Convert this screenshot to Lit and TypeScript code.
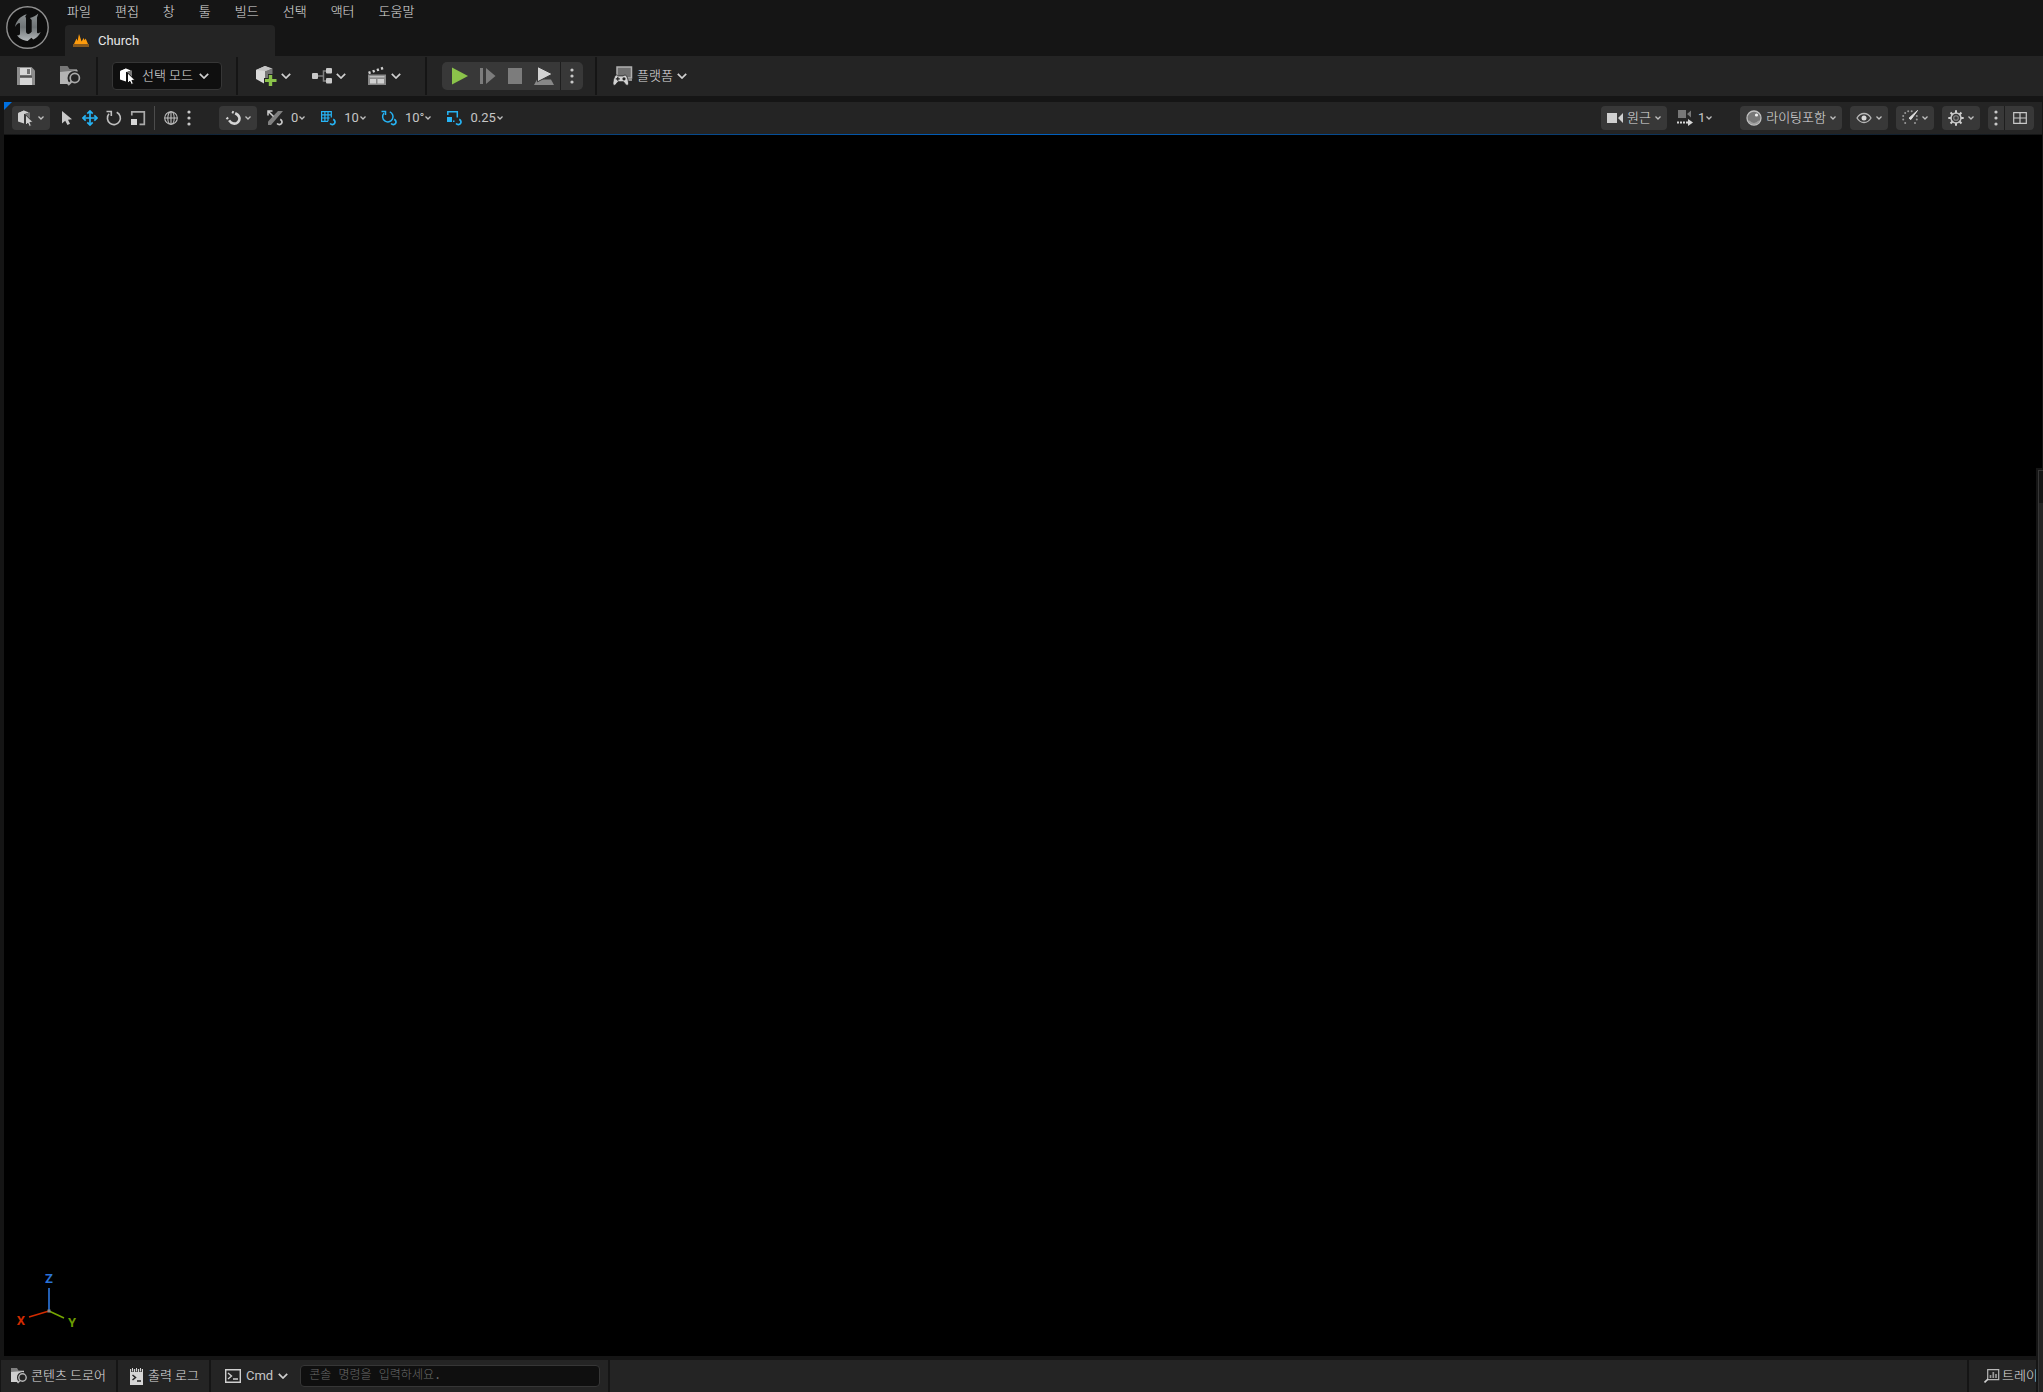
import { LitElement, html, css, svg, TemplateResult } from "lit";
import { customElement } from "lit/decorators.js";

const icon = (w: number, h: number, body: unknown) => html`
  <svg width=${w} height=${h} viewBox="0 0 ${w} ${h}" fill="none" aria-hidden="true">${body}</svg>`;

const chevron = icon(10, 6, svg`<path d="M.8.8 5 5 9.2.8" stroke="#d0d0d0" stroke-width="1.7"/>`);
const smallChevron = icon(6, 4, svg`<path d="M.5.5 3 3 5.5.5" stroke="#c0c0c0" stroke-width="1.3"/>`);

const magnetMark = (color: string) => svg`
  <path d="M13.2 9.4C15 10.200 15.500 12 14.500 13.400 13.400 14.900 11.500 14.900 10 13.500" stroke=${color} stroke-width="1.7"/>`;

const logo = icon(44, 44, svg`
  <defs>
    <linearGradient id="steel" x1="0" y1="0" x2="0" y2="1">
      <stop offset="0" stop-color="#8d9294"/><stop offset=".5" stop-color="#6e7375"/><stop offset="1" stop-color="#b4b8ba"/>
    </linearGradient>
  </defs>
  <circle cx="22.5" cy="22.5" r="20.7" fill="#0d0d0d" stroke="#909090" stroke-width="1.4"/>
  <path fill="url(#steel)" d="M10 22C11 16.3 15.2 11 21.7 9.3L20.2 11.5c.6.5.8 1.2.8 2v13c0 1.6 1 2.5 2.2 2.5 1.3 0 2.7-1.1 3.5-2.3V15.1L24.9 12.9c3.1-.6 6.2-2.2 8.4-4.4L32 12.5V27.4c0 1.1 1.4 1.2 3.7-.4-1.8 4.2-5 6.5-7.5 7.6l-1.8-1.9-3.8 3.3c-4.6-.5-9-2.8-10.500-6 1.5.6 2.900.1 2.900-1.500V19c0-1.800-2.500-1.300-5 3Z"/>`);

const levelIcon = icon(16, 13, svg`
  <path fill="#ff9c0c" d="M1 10 3.500 4.500 4.600 7 6 0 8.600 7.500 10.600 4 11.600 6.200 12.700 4.500 15 10Z"/>
  <path fill="#8a5a1c" d="M0 10h16v3H0Z"/>`);

const saveIcon = icon(18, 18, svg`
  <path fill="#8c8c8c" d="M0 0h14.500L18 3.500V18H0Z"/>
  <path fill="#d6d6d6" d="M3 1h11v7H3ZM3 11h12v7H3Z"/>
  <path fill="#707070" d="M10 2h3v5h-3Z"/><path fill="#555" d="M3 8.500h12v2H3Z"/>`);

const browseIcon = icon(21, 20, svg`
  <path fill="#777" d="M0 0h7.500l2 3H17v4H0Z"/>
  <path fill="#b4b4b4" d="M0 6 9.500 5 17.500 4v14H0Z"/>
  <circle cx="14.500" cy="12" r="7" fill="#242424"/>
  <circle cx="14.800" cy="12" r="4.600" stroke="#aaa" stroke-width="1.700"/>
  <path d="m11.500 15.500-3.500 3.500" stroke="#aaa" stroke-width="2.200"/>`);

const selectModeIcon = (light: string, side: string, back: string) => icon(16, 17, svg`
  <path fill=${light} d="M0 3.200 6 .500v13L0 11.500Z"/><path fill=${light} d="m0 3 6-2.500 5 2L7 4Z"/>
  <path fill=${side} d="m7 4 5-1.700V9L7 12Z"/>
  <path fill=${light} stroke=${back} d="M7.500 4.800v10.500l2.400-2 1.500 3.200 2-1-1.500-3 3-.4Z"/>`);

const addIcon = icon(21, 20, svg`
  <path fill="#dadada" d="M0 4 9 0l4.500 2v14L8 17.500 0 13Z"/>
  <path fill="#777" d="m9 5 7.500-2.500V13L9 17Z"/><path fill="#c4c4c4" d="M0 4 9 0l7.500 2.500L9 5Z"/>
  <path fill="#242424" d="M8 12h4V8h6v4h3v8H8Z"/>
  <path fill="#8bc34a" d="M12.800 9h3.400v4h4.300v3h-4.300v4h-3.400v-4H9v-3h3.800Z"/>`);

const graphIcon = icon(20, 16, svg`
  <path d="M5 8h6M14 3h-2.500v10H14" stroke="#808080" stroke-width="1.500"/>
  <rect y="5" width="6" height="6" rx="1" fill="#c8c8c8"/>
  <rect x="14" width="6" height="5.500" rx="1" fill="#c8c8c8"/><rect x="14" y="10" width="6" height="5.500" rx="1" fill="#c8c8c8"/>`);

const clapIcon = icon(20, 20, svg`
  <path d="M1.500 7 17.500 1.500" stroke="#d0d0d0" stroke-width="2.600" stroke-dasharray="2.200 2.200"/>
  <path fill="#898989" d="M1 8.500h18V19H1Z"/>
  <path fill="#d0d0d0" d="M3 13h6v4.500H3ZM10.500 13H17v4.500h-6.500Z"/><path d="M2.500 10.800h15" stroke="#d0d0d0"/>`);

const playIcon = icon(16, 18, svg`<path fill="#8bc34a" d="M0 .5 16 9 0 17.500Z"/>`);
const stepIcon = icon(16, 16, svg`<path fill="#7c7c7c" d="M0 0h3v16H0ZM6 0l9.500 8L6 16Z"/>`);
const stopIcon = icon(14, 16, svg`<path fill="#7c7c7c" d="M0 0h14v16H0Z"/>`);
const ejectIcon = icon(20, 18, svg`
  <path fill="#888" d="M3 12.500h14l3 5.500H0Z"/>
  <path fill="#d2d2d2" stroke="#383838" d="M3.500-.5 18.500 7 3.500 14.800Z"/>`);
const dotsIcon = icon(4, 16, svg`
  <circle cx="2" cy="2" r="1.600" fill="#c8c8c8"/><circle cx="2" cy="8" r="1.600" fill="#c8c8c8"/><circle cx="2" cy="14" r="1.600" fill="#c8c8c8"/>`);

const platformIcon = icon(20, 20, svg`
  <path d="M4 1h14.500v11H4Z" fill="#707070" stroke="#b0b0b0" stroke-width="1.500"/><path fill="#909090" d="M14 13h5v2h-5Z"/>
  <path fill="#d2d2d2" stroke="#242424" stroke-width=".8" d="M3.500 9c1 0 1.300.9 2 .9h4.500c.7 0 1-.9 2-.9 2 0 3.500 5.500 3.500 8.500 0 2-2 2.500-3.200.5l-1.800-2.300h-5.500L3.200 18C2 20 0 19.500 0 17.500 0 14.500 1.500 9 3.500 9Z"/>
  <path d="M4.800 10.800v4M2.800 12.800h4" stroke="#242424" stroke-width="1.200"/><circle cx="11" cy="12.800" r="1.600" fill="#242424"/>`);

const arrowIcon = icon(13, 16, svg`<path fill="#c8c8c8" d="M1 1v12.500l3.200-2.700L6.500 15l2.500-1.200L7 9.800l4-.6Z"/>`);
const moveIcon = icon(16, 16, svg`
  <path d="M8 2v12M2 8h12" stroke="#26b4f5" stroke-width="1.700"/>
  <path d="M5.300 3.700 8 1l2.700 2.700M5.300 12.300 8 15l2.700-2.700M3.700 5.300 1 8l2.700 2.700M12.300 5.300 15 8l-2.700 2.700" stroke="#26b4f5" stroke-width="1.700"/>`);
const rotateIcon = icon(16, 16, svg`
  <path d="M10.700 2.200A6.500 6.500 0 1 1 3 3.800" stroke="#c0c0c0" stroke-width="1.600"/>
  <path d="M.5 1.500h4.800V6" stroke="#c0c0c0" stroke-width="1.600"/>`);
const scaleIcon = icon(16, 16, svg`
  <path d="M1.800 5.500V1.800h12.500v12.500H9.500" stroke="#aaa" stroke-width="1.700"/><path fill="#d6d6d6" d="M1 9h6v6H1Z"/>`);
const globeIcon = icon(14, 14, svg`
  <g stroke="#c0c0c0" stroke-width="1.100"><circle cx="7" cy="7" r="6.300"/><ellipse cx="7" cy="7" rx="3.200" ry="6.300"/><path d="M.7 7h12.600M7 .7v12.600"/></g>`);
const magnetIcon = icon(16, 16, svg`
  <path d="M10.200 3.200c4.600 2 5.400 6.200 2.800 8.900-2.600 2.600-6.500 1.900-8.900-1.700" stroke="#d6d6d6" stroke-width="2.600"/>
  <path d="m8.700 2.600-1.700-.8M3 9 1.600 7.600" stroke="#d6d6d6" stroke-width="2.400"/>`);

const surfaceSnapIcon = icon(17, 17, svg`
  <path fill="#808080" d="M11 1h5L4 15H1v-3.500Z"/>
  <path d="m1.500 1.500 5 5M1 5.500V1h4.500" stroke="#d0d0d0" stroke-width="1.500"/>
  ${magnetMark("#c8c8c8")}`);
const gridSnapIcon = icon(17, 17, svg`
  <path d="M8 11.300H1.600V1.600h9.700V7.500M4.900 1.700v9.500M8 1.700v9.500M1.700 4.900h9.500M1.700 8h8" stroke="#26b4f5" stroke-width="1.200"/>${magnetMark("#26b4f5")}`);
const angleSnapIcon = icon(17, 17, svg`
  <path d="M8.800 1.900A5.200 5.200 0 1 1 3 3.200" stroke="#26b4f5" stroke-width="1.500"/>
  <path d="M.5 1.400h4V5" stroke="#26b4f5" stroke-width="1.500"/>${magnetMark("#26b4f5")}`);
const scaleSnapIcon = icon(17, 17, svg`
  <path d="M1.800 5V1.800h9.500V7.500M8.500 11.300H7" stroke="#26b4f5" stroke-width="1.500"/><path fill="#26b4f5" d="M1 7h5v5H1Z"/>${magnetMark("#26b4f5")}`);

const cameraIcon = icon(16, 12, svg`<path fill="#d0d0d0" d="M0 1h10v10H0ZM11 6l5-5v10Z"/>`);
const cameraSpeedIcon = icon(16, 16, svg`
  <path fill="#777" d="M1 0h8v8H1ZM10 4l4-3.500v7Z"/>
  <path d="M0 12.500h11" stroke="#d6d6d6" stroke-width="2" stroke-dasharray="2 1"/><path fill="#d6d6d6" d="M11 9 16 12.500 11 16Z"/>`);
const litIcon = icon(16, 16, svg`
  <circle cx="8" cy="8" r="7" fill="#777" stroke="#c0c0c0" stroke-width="1.300"/><path d="M3 11a6 6 0 0 0 10 0" stroke="#a0a0a0" stroke-width="1.500"/>
  <circle cx="10.500" cy="5" r="1.600" fill="#f0f0f0"/>`);
const eyeIcon = icon(16, 12, svg`
  <path d="M1 6c3.500-6 10.500-6 14 0-3.500 6-10.500 6-14 0Z" stroke="#b8b8b8" stroke-width="1.300"/><circle cx="8" cy="6" r="2.500" fill="#d8d8d8"/>`);
const gaugeDots = [[3.200, 13], [1.200, 9.500], [1.200, 6], [3.200, 3], [6.200, 1.300], [9.700, 1.300], [14.800, 6], [14.800, 9.500], [13, 13]];
const gaugeIcon = icon(16, 16, svg`
  ${gaugeDots.map(([x, y]) => svg`<circle cx=${x} cy=${y} r="1" fill="#999"/>`)}
  <path d="M15.500.5 8.800 9.600 7 8.200Z" stroke="#e0e0e0" fill="#e0e0e0"/>`);
const gearIcon = icon(16, 16, svg`
  ${[0, 45, 90, 135, 180, 225, 270, 315].map((a) => svg`<path d="M8 .3v3" stroke="#d0d0d0" stroke-width="2" transform="rotate(${a} 8 8)"/>`)}
  <circle cx="8" cy="8" r="5" stroke="#c8c8c8" stroke-width="1.500"/><circle cx="8" cy="8" r="2.300" stroke="#888" stroke-width="1.100"/>`);
const layoutIcon = icon(14, 12, svg`<path d="M.7.7h12.600v10.600H.7ZM7 .7v10.600M.7 6h12.600" stroke="#c8c8c8" stroke-width="1.200"/>`);

const drawerIcon = icon(16, 16, svg`
  <path fill="#808080" d="M0 0h6l1.500 2.500H13V6H0Z"/><path fill="#d0d0d0" d="m0 4 13-1v11H0Z"/>
  <circle cx="11.500" cy="9.500" r="5.500" fill="#242424"/><circle cx="11.500" cy="9.500" r="3.700" stroke="#b8b8b8" stroke-width="1.400"/>
  <path d="M9 12.500 6.500 15" stroke="#b8b8b8" stroke-width="1.700"/>`);
const logIcon = icon(13, 17, svg`
  <path fill="#d6d6d6" d="M0 1h13v16H0Z"/><path d="M2.500 0v4M6.500 0v4M10.500 0v4" stroke="#242424" stroke-width="2.600"/>
  <path d="M2.500 0v3.500M6.500 0v3.500M10.500 0v3.500" stroke="#d6d6d6"/><path d="m2.500 7 3 2.500-3 2.500M7 13h4" stroke="#242424" stroke-width="1.500"/>`);
const consoleIcon = icon(16, 14, svg`
  <path d="M.7.7h14.600v12.600H.7Z" stroke="#d0d0d0" stroke-width="1.400"/><path d="m3 4 3.500 3L3 10M8 10h5" stroke="#d0d0d0" stroke-width="1.400"/>`);
const traceIcon = icon(16, 16, svg`
  <path d="M3.700 1.700h11v10h-11Z" stroke="#b8b8b8" stroke-width="1.200"/>
  <path d="M6.500 10V7M9.300 10V4M12 10V6" stroke="#999" stroke-width="1.700"/><path d="m4 11-3.500 3.500" stroke="#d0d0d0" stroke-width="1.700"/>`);

const axes = icon(64, 64, svg`
  <path d="M34 18v23" stroke="#2f7fef" stroke-width="1.500"/><path d="m34 41-20 6" stroke="#d22b00" stroke-width="1.500"/>
  <path d="m34 41 15 7" stroke="#76a800" stroke-width="1.500"/><path d="M32.500 39.500h3v3h-3Z" fill="#888"/>
  <g font-family="Roboto, sans-serif" font-size="13" font-weight="700" text-anchor="middle">
    <text x="34" y="13" fill="#2a72d8">Z</text><text x="6" y="55" fill="#d22b00">X</text><text x="57" y="57" fill="#6a9c00">Y</text>
  </g>`);

const menus = ["파일", "편집", "창", "툴", "빌드", "선택", "액터", "도움말"];

@customElement("app-root")
export class AppRoot extends LitElement {
  static styles = css`
    :host {
      display: flex; flex-direction: column; height: 100vh; position: relative; overflow: hidden;
      background: #151515; color: #c6c6c6;
      font: 13px/16px Roboto, "Noto Sans CJK KR", sans-serif;
    }
    * { box-sizing: border-box; }
    svg { display: block; flex: none; }
    button {
      display: flex; align-items: center; flex: none; margin: 0; padding: 0; border: 0;
      background: none; color: inherit; font: inherit; white-space: nowrap; cursor: pointer;
    }
    .ko { font-weight: 300; color: #e0e0e0; }
    .header { display: flex; flex: none; height: 56px; }
    .logo { width: 55px; padding: 5px; flex: none; }
    .menu { display: flex; height: 24px; margin-bottom: 1px; }
    .menu button { padding: 0 12px; }
    .tab {
      width: 210px; height: 31px; margin-left: 10px; padding: 0 8px; gap: 9px;
      border-radius: 4px 4px 0 0; background: #242424; color: #e6e6e6;
    }
    .main-bar { display: flex; align-items: center; flex: none; height: 40px; background: #242424; }
    .group { display: flex; align-items: center; justify-content: center; gap: 21px; }
    .files { gap: 25px; padding: 0 15px 0 17px; }
    .rule { width: 2px; height: 38px; flex: none; background: #151515; }
    .mode {
      height: 28px; margin: 0 14px; padding: 0 12px 0 7px; gap: 6px;
      border: 1px solid #363636; border-radius: 4px; background: #0f0f0f;
    }
    .create { padding: 0 24px 0 18px; }
    .create button { gap: 4px; }
    .play {
      display: flex; align-items: center; height: 28px; margin: 0 12px 0 15px;
      border-radius: 5px; background: #383838;
    }
    .play button { height: 28px; }
    .transport { display: flex; gap: 12px; padding: 0 6px 0 10px; }
    .play .more { width: 23px; justify-content: center; border-left: 1px solid #1e1e1e; }
    .platform { gap: 4px; padding-left: 16px; }
    .view-bar {
      display: flex; align-items: center; flex: none; height: 33px; margin: 6px 1px 0 4px; padding: 0 8px 1px;
      position: relative;
      background: linear-gradient(90deg, #151515, #0062c4 50%, #151515) bottom / 100% 1px no-repeat, #242424;
    }
    .corner { position: absolute; left: 0; top: 0; border-top: 8px solid #0070e0; border-right: 8px solid transparent; }
    .chip { height: 24px; padding: 0 6px; gap: 4px; border-radius: 4px; background: #383838; }
    .tools { display: flex; align-items: center; gap: 8px; padding: 0 8px 0 11px; }
    .line { width: 1px; height: 24px; background: #4c4c4c; }
    .space { display: flex; align-items: center; gap: 9px; padding: 0 28px 0 9px; }
    .snaps { display: flex; align-items: center; gap: 15px; padding-left: 10px; }
    .snaps button { gap: 7px; }
    .value { display: flex; align-items: center; gap: 1px; }
    .grow { flex: 1; }
    .right { display: flex; align-items: center; gap: 8px; }
    .speed { gap: 5px; padding: 0 20px 0 2px; }
    .pair { display: flex; border-radius: 4px; overflow: hidden; background: #383838; }
    .pair button { height: 24px; justify-content: center; width: 16px; }
    .pair .wide { width: 30px; border-left: 1px solid #1e1e1e; }
    .viewport { flex: 1; position: relative; margin: 0 1px 0 4px; background: #000; }
    .axes { position: absolute; left: 11px; bottom: 22px; }
    .status { display: flex; flex: none; height: 32px; margin: 4px 0 0 1px; gap: 2px; }
    .cell { display: flex; align-items: center; background: #242424; gap: 4px; white-space: nowrap; overflow: hidden; }
    .drawer { padding: 0 10px; }
    .log { gap: 5px; padding: 0 10px 0 12px; }
    .cmd { padding: 0 8px 0 14px; gap: 12px; font-weight: 400; color: #c6c6c6; }
    .cmd button { gap: 5px; }
    .console {
      width: 300px; height: 22px; padding: 0 8px; border: 1px solid #363636; border-radius: 4px; outline: 0;
      background: #0f0f0f; color: #c0c0c0; font: 300 12px "Liberation Mono", "Noto Sans CJK KR", monospace;
    }
    .console::placeholder { color: #6a6a6a; opacity: 1; }
    .trace { width: 74px; padding-left: 15px; gap: 2px; }
    .side {
      position: absolute; right: 0; top: 468px; bottom: 0; width: 7px; padding-top: 33px;
      border: solid #151515; border-width: 2px 0 0 2px; background: #151515; box-shadow: inset 1px 1px #363636;
    }
    .side-body { height: 100%; margin-left: 1px; background: #242424; }
  `;

  private chip(glyph: TemplateResult, label: string, text = "") {
    return html`<button class="chip ko" aria-label=${label}>${glyph}${text ? html`<span>${text}</span>` : ""}${smallChevron}</button>`;
  }

  private snap(glyph: TemplateResult, value: string, label: string) {
    return html`<button aria-label="${label} ${value}">${glyph}<span class="value">${value}${smallChevron}</span></button>`;
  }

  private tool(glyph: TemplateResult, label: string, cls = "") {
    return html`<button class=${cls} aria-label=${label}>${glyph}</button>`;
  }

  render() {
    return html`
      <header class="header">
        <div class="logo">${logo}</div>
        <div>
          <nav class="menu ko">${menus.map((m) => html`<button>${m}</button>`)}</nav>
          <button class="tab">${levelIcon}<span>Church</span></button>
        </div>
      </header>

      <div class="main-bar">
        <div class="group files">${this.tool(saveIcon, "저장")}${this.tool(browseIcon, "찾아보기")}</div>
        <div class="rule"></div>
        <button class="mode ko">${selectModeIcon("#fff", "#777", "#0f0f0f")}<span>선택 모드</span>${chevron}</button>
        <div class="rule"></div>
        <div class="group create">
          <button aria-label="추가">${addIcon}${chevron}</button>
          <button aria-label="블루프린트">${graphIcon}${chevron}</button>
          <button aria-label="시네마틱">${clapIcon}${chevron}</button>
        </div>
        <div class="rule"></div>
        <div class="play">
          <div class="transport">
            ${this.tool(playIcon, "플레이")}${this.tool(stepIcon, "프레임 스킵")}${this.tool(stopIcon, "중지")}${this.tool(ejectIcon, "빙의 해제")}
          </div>
          ${this.tool(dotsIcon, "플레이 옵션", "more")}
        </div>
        <div class="rule"></div>
        <button class="platform ko">${platformIcon}<span>플랫폼</span>${chevron}</button>
      </div>

      <div class="view-bar">
        <span class="corner"></span>
        ${this.chip(selectModeIcon("#d0d0d0", "#777", "#383838"), "선택 모드")}
        <div class="tools">
          ${this.tool(arrowIcon, "선택")}${this.tool(moveIcon, "이동")}${this.tool(rotateIcon, "회전")}${this.tool(scaleIcon, "스케일")}
        </div>
        <div class="line"></div>
        <div class="space">${this.tool(globeIcon, "월드 좌표")}${this.tool(dotsIcon, "더 보기")}</div>
        ${this.chip(magnetIcon, "스냅")}
        <div class="snaps">
          ${this.snap(surfaceSnapIcon, "0", "표면 스냅")}
          ${this.snap(gridSnapIcon, "10", "그리드 스냅")}
          ${this.snap(angleSnapIcon, "10°", "회전 스냅")}
          ${this.snap(scaleSnapIcon, "0.25", "스케일 스냅")}
        </div>
        <div class="grow"></div>
        <div class="right">
          ${this.chip(cameraIcon, "원근", "원근")}
          <button class="speed" aria-label="카메라 속도 1">${cameraSpeedIcon}<span class="value">1${smallChevron}</span></button>
          ${this.chip(litIcon, "라이팅포함", "라이팅포함")}
          ${this.chip(eyeIcon, "표시")}
          ${this.chip(gaugeIcon, "성능")}
          ${this.chip(gearIcon, "설정")}
          <div class="pair">${this.tool(dotsIcon, "더 보기")}${this.tool(layoutIcon, "레이아웃", "wide")}</div>
        </div>
      </div>

      <main class="viewport"><div class="axes">${axes}</div></main>

      <footer class="status ko">
        <button class="cell drawer">${drawerIcon}<span>콘텐츠 드로어</span></button>
        <button class="cell log">${logIcon}<span>출력 로그</span></button>
        <div class="cell cmd">
          <button>${consoleIcon}<span>Cmd</span>${chevron}</button>
          <input class="console" aria-label="콘솔 명령" placeholder="콘솔 명령을 입력하세요." />
        </div>
        <div class="cell grow"></div>
        <button class="cell trace">${traceIcon}<span>트레이스</span></button>
      </footer>

      <aside class="side"><div class="side-body"></div></aside>
    `;
  }
}
